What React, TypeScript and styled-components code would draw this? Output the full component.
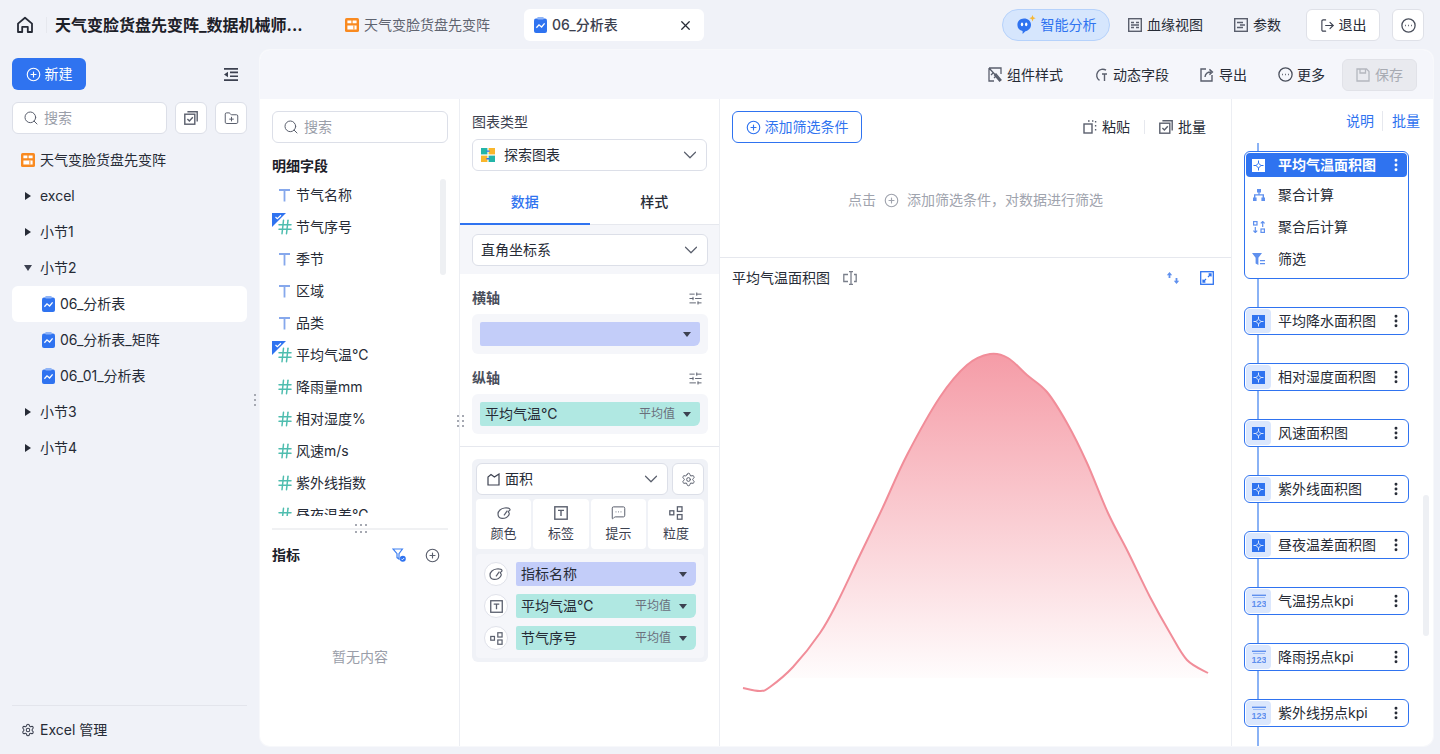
import React from "react";
import styled, { createGlobalStyle } from "styled-components";
import {
  ChevronDown,
  CirclePlus,
  EllipsisVertical,
  FolderPlus,
  Hash,
  LogOut,
  MessageSquareMore,
  Search,
  Settings,
  SlidersHorizontal,
  X,
} from "lucide-react";

const BLUE = "#2f73f0";
const INK = "#262b36";
const ICON = "#5a5f6d";

const GlobalStyle = createGlobalStyle`
  html, body { margin: 0; padding: 0; height: 100%; overflow: hidden; }
  body {
    font-family: "Inter", "Noto Sans CJK SC", "Noto Sans", sans-serif;
    font-size: 14px;
    line-height: 20px;
    color: ${INK};
  }
  * { box-sizing: border-box; }
`;

/* ---------- icons ---------- */
const Svg = styled.svg`
  flex: none;
  display: block;
`;

const HomeIcon = () => (
  <Svg width="18" height="18" viewBox="0 0 18 18" fill="none" stroke="#262b36" strokeWidth="1.8" strokeLinejoin="round">
    <path d="M2 7.600 9 1.800l7 5.800V16h-4.200v-5.200H6.200V16H2z" />
  </Svg>
);
const DashIcon = () => (
  <Svg width="14" height="14" viewBox="0 0 14 14">
    <rect width="14" height="14" rx="1.600" fill="#f98a20" />
    <path d="M2.400 2.400h4v2.800h-4zM7.600 2.400h4v2.800h-4zM2.400 7.400h9.200v4.200H2.400z" fill="#fff" />
    <path d="M8.400 7.400h1v4.200h-1z" fill="#f98a20" />
  </Svg>
);
const SheetIcon = () => (
  <Svg width="13" height="16" viewBox="0 0 13 16">
    <rect y="1.400" width="13" height="14.600" rx="2" fill="#2f73f0" />
    <rect x="3.200" y="0" width="6.600" height="2.600" rx="1" fill="#8fb4f7" />
    <path d="M2.400 10.800 5 7.800 7.600 10l3-3.600" fill="none" stroke="#fff" strokeWidth="1.300" />
  </Svg>
);
const PuzzleIcon = ({ color = "#2f73f0", cut = "#dbe7fd" }: { color?: string; cut?: string }) => (
  <Svg width="13" height="13" viewBox="0 0 13 13">
    <rect width="13" height="13" fill={color} />
    <path d="M6.500 1.500V4.200L4 6.500M1.500 6.500H4L6.500 9V11.500M11.500 6.500H9L6.500 4.200M9 6.500 6.500 9" fill="none" stroke={cut} strokeWidth="1" />
  </Svg>
);
const KpiBadge = styled.text`
  font-family: "Liberation Sans", sans-serif;
  font-size: 9px;
  font-weight: 700;
`;
const KpiIcon = () => (
  <Svg width="14" height="14" viewBox="0 0 14 14">
    <rect width="14" height="1.400" y="0.600" fill="#5f90ee" />
    <rect x="1" width="12" height="1" y="3" fill="#9dbcf5" />
    <KpiBadge x="7" y="13" textAnchor="middle" fill="#5f90ee">123</KpiBadge>
  </Svg>
);
const BotIcon = () => (
  <Svg width="20" height="20" viewBox="0 0 20 20">
    <path d="M8 3.600c4 0 7 2.700 7 6.200 0 3.400-2.600 6-5.600 6.400L6.600 19v-3c-3-.7-5.200-3-5.200-6.100 0-3.500 2.700-6.300 6.600-6.300z" fill="#2f73f0" />
    <ellipse cx="6" cy="9.400" rx="1.200" ry="1.800" fill="#fff" />
    <ellipse cx="10.200" cy="9.400" rx="1.200" ry="1.800" fill="#fff" />
    <path d="M16.500 0l.9 2.300 2.300.9-2.300.9-.9 2.300-.9-2.300-2.300-.9 2.300-.9z" fill="#f7b733" />
  </Svg>
);
const PanelIcon = ({ double }: { double?: boolean }) => (
  <Svg width="14" height="14" viewBox="0 0 14 14" fill="none" stroke="#5a5f6d">
    <rect x="0.700" y="0.700" width="12.600" height="12.600" strokeWidth="1.400" />
    {double ? (
      <path d="M3 4.500h3M8 4.500h3M3 7h8M3 9.500h3M8 9.500h3" strokeWidth="1.300" />
    ) : (
      <path d="M3 4.500h6M6 7h5M3 9.500h6" strokeWidth="1.300" />
    )}
  </Svg>
);
const OutdentIcon = () => (
  <Svg width="14" height="13" viewBox="0 0 14 13" fill="#3c4150">
    <path d="M0 0h14v1.800H0zM6 3.600h8v1.600H6zM6 7.400h8V9H6zM0 11.200h14V13H0zM4 3.800v5.400L0 6.500z" />
  </Svg>
);
const MoreIcon = () => (
  <Svg width="15" height="15" viewBox="0 0 15 15" fill="none" stroke="#4a4f5c" strokeWidth="1.300">
    <circle cx="7.500" cy="7.500" r="6.600" />
    <path d="M4.200 7.500h.8M7.100 7.500h.8M10 7.500h.8" strokeWidth="1.600" />
  </Svg>
);
const StyleIcon = () => (
  <Svg width="14" height="15" viewBox="0 0 14 15" fill="none" stroke="#5a5f6d" strokeWidth="1.300">
    <path d="M1 1h12v6M1 1v13h5M1 1l11 12M5 6l-2 2M8 9l-2 2" />
    <path d="M8 7l5 6-1.400 1-5-6z" />
  </Svg>
);
const DynamicIcon = () => (
  <Svg width="14" height="15" viewBox="0 0 14 15" fill="none" stroke="#5a5f6d" strokeWidth="1.400">
    <path d="M12 3.200A6 6 0 1 0 5.500 13.400" />
    <path d="M8 7h5M10.500 7v7" />
  </Svg>
);
const ExportIcon = () => (
  <Svg width="14" height="15" viewBox="0 0 14 15" fill="none" stroke="#5a5f6d" strokeWidth="1.400">
    <path d="M6 2H1v12h11V8" />
    <path d="M5 10c.3-3 2.400-5 6-5M9.400 2.400 12.400 5l-3 2.600" />
  </Svg>
);
const SaveIcon = () => (
  <Svg width="14" height="14" viewBox="0 0 14 14" fill="none" stroke="#b4b7bf" strokeWidth="1.300">
    <path d="M1 1h9.500L13 3.500V13H1zM4 1v4h5.500V1" />
  </Svg>
);
const PasteIcon = () => (
  <Svg width="14" height="14" viewBox="0 0 14 14" fill="none" stroke="#5a5f6d" strokeWidth="1.400">
    <rect x="1" y="4" width="8" height="9" />
    <path d="M5 1h1.600M9 1h1.400M12.600 1v1.600M12.600 5v1.600M12.600 9v1.400" />
  </Svg>
);
const BatchIcon = () => (
  <Svg width="14" height="14" viewBox="0 0 14 14" fill="none" stroke="#5a5f6d" strokeWidth="1.400">
    <rect x="0.800" y="3.200" width="10" height="10" />
    <path d="M3.400.8h9.800v9.800M3.400 8l2 2 3.400-3.800" />
  </Svg>
);
const CaretDown = styled.span<{ $big?: boolean }>`
  flex: none;
  width: 0;
  height: 0;
  border-left: ${(p) => (p.$big ? 4.5 : 4)}px solid transparent;
  border-right: ${(p) => (p.$big ? 4.5 : 4)}px solid transparent;
  border-top: ${(p) => (p.$big ? 6 : 5)}px solid #3c4150;
`;
const CaretRight = styled.span`
  flex: none;
  width: 0;
  height: 0;
  border-top: 4.500px solid transparent;
  border-bottom: 4.500px solid transparent;
  border-left: 6px solid #262b36;
`;
const ExploreIcon = () => (
  <Svg width="14" height="14" viewBox="0 0 14 14">
    <rect width="6.400" height="6.400" fill="#23b5a8" />
    <rect x="7.600" width="6.400" height="6.400" fill="#f9b62c" />
    <rect y="7.600" width="6.400" height="6.400" fill="#f9b62c" />
    <rect x="7.600" y="7.600" width="6.400" height="6.400" fill="#23b5a8" />
    <path d="M5.400 2.400h3.200v1.400H5.400zM5.400 10h3.200v1.400H5.400z" fill="#2f73f0" />
  </Svg>
);
const AreaIcon = () => (
  <Svg width="13" height="13" viewBox="0 0 13 13" fill="none" stroke="#3c4150" strokeWidth="1.200">
    <path d="M1 12V4l3-2.400L7.400 4 12 1v11z" />
  </Svg>
);
const PaletteIcon = ({ size = 14 }: { size?: number }) => (
  <Svg width={size} height={size} viewBox="0 0 14 14" fill="none" stroke="#5a5f6d" strokeWidth="1.200">
    <path d="M1 8c0-3 3-5.600 6.600-6 2.400-.2 5 .4 5.400 1.400.4 1.200-1.600 1.200-1.600 2.400 0 1 1.200 1 .8 2.400C11.600 11 8 12.600 5 12.400 2.600 12.200 1 10.400 1 8z" />
    <path d="M7 9.400 10.400 4.600" />
  </Svg>
);
const LabelIcon = ({ size = 14 }: { size?: number }) => (
  <Svg width={size} height={size} viewBox="0 0 14 14" fill="none" stroke="#5a5f6d" strokeWidth="1.400">
    <rect x="0.800" y="0.800" width="12.400" height="12.400" />
    <path d="M4 4.400h6M7 4.400v5.600" />
  </Svg>
);
const GrainIcon = ({ size = 14 }: { size?: number }) => (
  <Svg width={size} height={size} viewBox="0 0 14 14" fill="none" stroke="#5a5f6d" strokeWidth="1.300">
    <rect x="0.800" y="4.800" width="4" height="4" />
    <rect x="8.400" y="0.800" width="4.600" height="4.600" />
    <rect x="8.400" y="8.600" width="4.600" height="4.600" />
  </Svg>
);
const FilterDoneIcon = () => (
  <Svg width="14" height="14" viewBox="0 0 14 14" fill="none">
    <path d="M1 1h9.400L7 5.600V11L5 9.600V5.600z" stroke="#3f80f2" strokeWidth="1.200" />
    <circle cx="10.800" cy="10.800" r="3" fill="#2f73f0" />
    <path d="M9.400 10.800l1 1 1.800-1.800" stroke="#fff" strokeWidth="0.900" />
  </Svg>
);
const TextFieldIcon = () => (
  <Svg width="14" height="14" viewBox="0 0 14 14" fill="none" stroke="#86a8ec" strokeWidth="1.800">
    <path d="M1 2h11M6.500 2V13.500" />
  </Svg>
);
const MergeIcon = () => (
  <Svg width="12" height="12" viewBox="0 0 12 12" fill="#5f90ee">
    <path d="M4 0h4v3.600H6.600v1.600H11V8.400h1V12H8.400V8.400h1.200V6.600H2.400v1.800h1.200V12H0V8.400h1V5.200h4.400V3.600H4z" />
  </Svg>
);
const PostCalcIcon = () => (
  <Svg width="12" height="12" viewBox="0 0 12 12" fill="none" stroke="#5f90ee" strokeWidth="1.200">
    <rect x="0.600" y="0.600" width="3.400" height="3.400" />
    <rect x="8" y="8" width="3.400" height="3.400" />
    <path d="M2.300 6v5.400M.4 9.600l1.900 1.900 1.900-1.900M9.700 6V.6M7.800 2.400 9.700.5l1.900 1.900" />
  </Svg>
);
const FilterIcon = () => (
  <Svg width="13" height="12" viewBox="0 0 13 12">
    <path d="M0 0h10L6.400 4.800V12L3.600 10.400V4.800z" fill="#5f90ee" />
    <path d="M8 7h5v1.200H8zM8 10h5v1.200H8z" fill="#5f90ee" />
  </Svg>
);
const SwapIcon = () => (
  <Svg width="14" height="14" viewBox="0 0 14 14" fill="#5f90ee">
    <path d="M3.500 1 6.200 4.200H4.400V7H2.600V4.200H.8zM10.500 13 7.800 9.800h1.800V7h1.800v2.800h1.800z" />
  </Svg>
);
const ExpandIcon = () => (
  <Svg width="14" height="14" viewBox="0 0 14 14" fill="none" stroke="#2f73f0" strokeWidth="1.300">
    <rect x="0.700" y="0.700" width="12.600" height="12.600" />
    <path d="M8 6l3-3M8.600 3H11v2.400M6 8l-3 3M5.400 11H3V8.600" />
  </Svg>
);
const CursorIcon = () => (
  <Svg width="14" height="14" viewBox="0 0 14 14" fill="none" stroke="#7a7f8b" strokeWidth="1.300">
    <path d="M5 3.500H.8v7H5M11 3.500h2.200v7H11M6 .7h4M6 13.300h4M8 .7v12.600" />
  </Svg>
);
const NumberGlyph = styled(Hash)`
  flex: none;
  margin: 0 -2px 0 -2px;
`;

/* ---------- shell ---------- */
const Page = styled.div`
  width: 1440px;
  height: 754px;
  background: #f0f2f8;
  display: flex;
  flex-direction: column;
  overflow: hidden;
`;
const TopBar = styled.header`
  height: 50px;
  flex: none;
  display: flex;
  align-items: center;
  padding: 0 16px;
`;
const HomeButton = styled.div`
  width: 31px;
  flex: none;
  border-right: 1px solid #e6e8ee;
  height: 16px;
  display: flex;
  align-items: center;
  margin-right: 8px;
`;
const Title = styled.div`
  font-size: 16px;
  font-weight: 700;
  width: 252px;
  flex: none;
  white-space: nowrap;
  color: #1c2028;
`;
const OpenTab = styled.div<{ $active?: boolean }>`
  display: flex;
  align-items: center;
  gap: 5px;
  height: 32px;
  flex: none;
  border-radius: 6px;
  padding: 0 ${(p) => (p.$active ? 10 : 9)}px;
  background: ${(p) => (p.$active ? "#fff" : "transparent")};
  color: ${(p) => (p.$active ? "#3c4150" : "#5f6470")};
  font-weight: ${(p) => (p.$active ? 500 : 400)};
  width: ${(p) => (p.$active ? "180px" : "auto")};
  margin-left: ${(p) => (p.$active ? "25px" : "29px")};
`;
const TabClose = styled.span`
  margin-left: auto;
  display: flex;
  color: #262b36;
  margin-right: 1px;
`;
const TopActions = styled.div`
  margin-left: auto;
  display: flex;
  align-items: center;
`;
const AiPill = styled.div`
  height: 32px;
  width: 108px;
  border-radius: 16px;
  background: #d6e6fd;
  border: 1px solid #b6d2fb;
  color: ${BLUE};
  display: flex;
  align-items: center;
  justify-content: center;
  gap: 5px;
  margin-right: 18px;
`;
const TextAction = styled.div<{ $gap?: number }>`
  display: flex;
  align-items: center;
  gap: 5px;
  margin-right: ${(p) => p.$gap ?? 0}px;
  white-space: nowrap;
`;
const OutlineButton = styled.div<{ $wide?: boolean }>`
  height: 32px;
  width: ${(p) => (p.$wide ? "74px" : "32px")};
  margin-left: ${(p) => (p.$wide ? "0" : "12px")};
  background: #fff;
  border: 1px solid #dfe1e8;
  border-radius: 6px;
  display: flex;
  align-items: center;
  justify-content: center;
  gap: 4px;
  color: ${INK};
`;
const Body = styled.div`
  flex: 1;
  min-height: 0;
  display: flex;
`;

/* ---------- left sidebar ---------- */
const Sidebar = styled.aside`
  width: 260px;
  flex: none;
  display: flex;
  flex-direction: column;
  padding: 8px 13px 0 12px;
  position: relative;
`;
const SideHead = styled.div`
  display: flex;
  align-items: center;
  justify-content: space-between;
  height: 32px;
  padding-right: 9px;
  margin-bottom: 12px;
`;
const NewButton = styled.div`
  width: 74px;
  height: 32px;
  border-radius: 6px;
  background: ${BLUE};
  color: #fff;
  display: flex;
  align-items: center;
  justify-content: center;
  gap: 4px;
`;
const SearchRow = styled.div`
  display: flex;
  gap: 8px;
  margin-bottom: 8px;
`;
const SearchBox = styled.div`
  flex: 1;
  height: 32px;
  display: flex;
  align-items: center;
  gap: 5px;
  padding-left: 10px;
  border: 1px solid #dcdfe8;
  border-radius: 6px;
  background: #fff;
  color: #9a9ea9;
`;
const FieldSearch = styled(SearchBox)`
  flex: none;
`;
const SquareButton = styled.div`
  width: 32px;
  height: 32px;
  flex: none;
  border: 1px solid #dcdfe8;
  border-radius: 6px;
  background: #fff;
  display: flex;
  align-items: center;
  justify-content: center;
`;
const TreeRow = styled.div<{ $indent?: number; $active?: boolean }>`
  height: 36px;
  display: flex;
  align-items: center;
  padding-left: ${(p) => p.$indent ?? 12}px;
  gap: 5px;
  border-radius: 6px;
  background: ${(p) => (p.$active ? "#fff" : "transparent")};
`;
const CaretSlot = styled.span`
  width: 16px;
  display: flex;
  justify-content: center;
  margin-right: -1px;
  margin-left: -1px;
`;
const SideFoot = styled.div`
  margin-top: auto;
  height: 49px;
  border-top: 1px solid #e3e5ec;
  display: flex;
  align-items: center;
  gap: 5px;
  padding-left: 9px;
`;
const DragDots = styled.div`
  position: absolute;
  display: grid;
  grid-template-columns: 2px;
  gap: 3px;
  z-index: 1;
  & > i {
    width: 2px;
    height: 2px;
    background: #a6a9b2;
  }
`;
const SideDots = styled(DragDots)`
  right: 4px;
  top: 344px;
`;
const SplitDots = styled(DragDots)`
  grid-template-columns: repeat(3, 2px);
  left: 95px;
  top: 425px;
  row-gap: 5px;
`;
const ColumnDots = styled(DragDots)`
  grid-template-columns: repeat(2, 2px);
  left: 197px;
  top: 316px;
`;
const Dots = ({ Comp, n }: { Comp: typeof DragDots; n: number }) => (
  <Comp>{Array.from({ length: n }, (_, i) => <i key={i} />)}</Comp>
);

/* ---------- main panel ---------- */
const Main = styled.main`
  flex: 1;
  min-width: 0;
  margin: 0 7px 8px 0;
  border-radius: 10px;
  background: #fff;
  box-shadow: 0 0 0 1px #f7f8fb;
  display: flex;
  flex-direction: column;
  overflow: hidden;
`;
const Toolbar = styled.div`
  height: 49px;
  flex: none;
  background: #f5f6fb;
  display: flex;
  align-items: center;
  justify-content: flex-end;
  padding-right: 16px;
  gap: 31px;
`;
const SaveButton = styled.div`
  width: 75px;
  height: 32px;
  background: #e9eaef;
  border: 1px solid #e1e2e8;
  border-radius: 6px;
  color: #a8abb3;
  display: flex;
  align-items: center;
  justify-content: center;
  gap: 5px;
  margin-left: -14px;
`;
const MoreAction = styled(TextAction)`
  gap: 4px;
`;
const Columns = styled.div`
  flex: 1;
  min-height: 0;
  display: flex;
`;

/* ---------- field column ---------- */
const FieldColumn = styled.section`
  width: 200px;
  flex: none;
  border-right: 1px solid #eceef3;
  padding: 12px 11px 0 12px;
  display: flex;
  flex-direction: column;
  position: relative;
`;
const SectionTitle = styled.div`
  font-weight: 700;
  font-size: 14px;
  color: #1c2028;
  line-height: 20px;
`;
const FieldHead = styled(SectionTitle)`
  margin-top: 13px;
`;
const FieldList = styled.div`
  height: 337px;
  flex: none;
  margin-top: 3px;
  overflow: hidden;
  position: relative;
`;
const FieldRow = styled.div`
  height: 32px;
  display: flex;
  align-items: center;
  gap: 4px;
  padding-left: 6px;
  position: relative;
`;
const CheckCorner = styled.svg`
  position: absolute;
  left: 0;
  top: 2px;
  z-index: 1;
`;
const ScrollThumb = styled.div`
  position: absolute;
  right: 2px;
  top: 0;
  width: 6px;
  height: 96px;
  background: #eef0f3;
  border-radius: 3px;
`;
const SplitLine = styled.div`
  height: 2px;
  background: #f0f1f3;
  margin-top: 12px;
  flex: none;
`;
const MetricHead = styled.div`
  display: flex;
  align-items: center;
  margin-top: 15px;
  padding-right: 8px;
  gap: 19px;
  & > :first-child {
    margin-right: auto;
  }
`;
const EmptyText = styled.div`
  text-align: center;
  margin-top: 82px;
  color: #9a9ea9;
`;

/* ---------- config column ---------- */
const ConfigColumn = styled.section`
  width: 260px;
  flex: none;
  border-right: 1px solid #eceef3;
  display: flex;
  flex-direction: column;
`;
const ChartTypeBlock = styled.div`
  padding: 13px 12px 0;
`;
const Label = styled.div`
  color: #3c4150;
  margin-bottom: 7px;
`;
const SelectBox = styled.div<{ $w?: number }>`
  height: 32px;
  width: ${(p) => (p.$w ? `${p.$w}px` : "100%")};
  border: 1px solid #dcdfe8;
  border-radius: 6px;
  background: #fff;
  display: flex;
  align-items: center;
  gap: 9px;
  padding: 0 8px;
  & > :last-child {
    margin-left: auto;
    margin-right: -3px;
  }
`;
const Tabs = styled.div`
  display: flex;
  height: 54px;
  flex: none;
  border-bottom: 1px solid #e6e8ee;
`;
const Tab = styled.div<{ $active?: boolean }>`
  flex: 1;
  display: flex;
  align-items: center;
  justify-content: center;
  padding-top: 10px;
  font-weight: 500;
  color: ${(p) => (p.$active ? BLUE : INK)};
  border-bottom: 2px solid ${(p) => (p.$active ? BLUE : "transparent")};
  margin-bottom: -1px;
`;
const CoordBlock = styled.div`
  background: #f5f6fa;
  height: 49px;
  flex: none;
  padding: 9px 11px 0 12px;
`;
const AxisHead = styled.div<{ $first?: boolean }>`
  display: flex;
  align-items: center;
  justify-content: space-between;
  padding: 0 16px 0 12px;
  height: 20px;
  margin-top: ${(p) => (p.$first ? 14 : 0)}px;
  font-weight: 700;
  color: #4a4f5c;
`;
const AxisBlock = styled.div`
  margin: 6px 11px 14px 12px;
  background: #f5f6fa;
  border-radius: 6px;
  padding: 8px;
  height: 40px;
`;
const Pill = styled.div<{ $tone: "violet" | "teal" }>`
  height: 24px;
  flex: 1;
  min-width: 0;
  border-radius: 2px 2px 6px 2px;
  background: ${(p) => (p.$tone === "violet" ? "#c3cdf9" : "#b0e8e2")};
  display: flex;
  align-items: center;
  padding: 0 9px 0 5px;
  color: #262b36;
  justify-content: space-between;
`;
const PillRight = styled.span`
  display: flex;
  align-items: center;
  gap: 8px;
  font-size: 12px;
  color: #6a6f7c;
  margin-left: auto;
`;
const ConfigDivider = styled.div`
  height: 1px;
  background: #e6e8ee;
  margin-top: -2px;
`;
const MarkBox = styled.div`
  margin: 12px 11px 0 12px;
  background: #f0f2f7;
  border-radius: 6px;
  padding: 4px;
  display: flex;
  flex-direction: column;
  gap: 4px;
`;
const MarkTop = styled.div`
  display: flex;
  gap: 4px;
`;
const MarkSelectIcon = styled.span`
  display: flex;
  align-items: center;
  gap: 5px;
  margin-left: 2px;
`;
const MarkGrid = styled.div`
  display: grid;
  grid-template-columns: 55px 56px 55px 56px;
  gap: 2px;
`;
const MarkCell = styled.div`
  height: 50px;
  background: #fff;
  border-radius: 4px;
  display: flex;
  flex-direction: column;
  align-items: center;
  justify-content: center;
  gap: 3px;
  font-size: 13px;
  color: #3c4150;
`;
const EncodeBox = styled.div`
  margin-top: 1px;
  background: #f5f6fa;
  border-radius: 4px;
  padding: 8px;
  display: flex;
  flex-direction: column;
  gap: 8px;
`;
const EncodeRow = styled.div`
  display: flex;
  align-items: center;
  gap: 8px;
`;
const EncodeIcon = styled.div`
  width: 24px;
  height: 24px;
  flex: none;
  border-radius: 50%;
  border: 1px solid #e0e2ea;
  background: #fff;
  display: flex;
  align-items: center;
  justify-content: center;
`;

/* ---------- chart column ---------- */
const ChartColumn = styled.section`
  width: 512px;
  flex: none;
  border-right: 1px solid #eceef3;
  display: flex;
  flex-direction: column;
  min-height: 0;
`;
const FilterPanel = styled.div`
  height: 159px;
  flex: none;
  border-bottom: 1px solid #e6e8ee;
  padding: 12px 12px 0;
`;
const FilterBar = styled.div`
  display: flex;
  align-items: center;
  justify-content: space-between;
`;
const AddFilter = styled.div`
  width: 130px;
  height: 32px;
  border: 1px solid ${BLUE};
  border-radius: 6px;
  color: ${BLUE};
  display: flex;
  align-items: center;
  justify-content: center;
  gap: 4px;
`;
const PasteGroup = styled.div`
  display: flex;
  align-items: center;
  padding-right: 13px;
`;
const PasteSep = styled.span`
  width: 1px;
  height: 14px;
  background: #e6e8ee;
  margin: 0 14px;
`;
const FilterHint = styled.div`
  display: flex;
  align-items: center;
  justify-content: center;
  gap: 8px;
  margin-top: 47px;
  color: #a0a4ae;
`;
const ChartHead = styled.div`
  height: 40px;
  flex: none;
  display: flex;
  align-items: center;
  padding: 0 17px 0 12px;
  gap: 13px;
`;
const ChartIcons = styled.div`
  margin-left: auto;
  display: flex;
  gap: 20px;
`;
const ChartSvg = styled.svg`
  display: block;
  flex: none;
`;

const points: [number, number][] = [
  [23, 398], [40, 401], [50, 397], [73, 377], [100, 343], [117, 313], [140, 265],
  [163, 217], [187, 165], [220, 107], [247, 75], [270, 64], [288, 68], [307, 85],
  [327, 102], [347, 133], [367, 173], [388, 223], [408, 262], [430, 307], [450, 343],
  [467, 370], [488, 383],
];

// catmull-rom through the sampled points, close enough to the chart's smoothing
function smoothPath(pts: [number, number][]) {
  let d = `M${pts[0][0]} ${pts[0][1]}`;
  for (let i = 0; i < pts.length - 1; i++) {
    const p0 = pts[Math.max(i - 1, 0)];
    const p1 = pts[i];
    const p2 = pts[i + 1];
    const p3 = pts[Math.min(i + 2, pts.length - 1)];
    const c1x = p1[0] + (p2[0] - p0[0]) / 6;
    const c1y = p1[1] + (p2[1] - p0[1]) / 6;
    const c2x = p2[0] - (p3[0] - p1[0]) / 6;
    const c2y = p2[1] - (p3[1] - p1[1]) / 6;
    d += ` C${c1x.toFixed(1)} ${c1y.toFixed(1)} ${c2x.toFixed(1)} ${c2y.toFixed(1)} ${p2[0]} ${p2[1]}`;
  }
  return d;
}

const AreaChart = () => {
  const line = smoothPath(points);
  return (
    <ChartSvg width="511" height="430" viewBox="0 8 511 430">
      <defs>
        <linearGradient id="areaFill" x1="0" y1="64" x2="0" y2="388" gradientUnits="userSpaceOnUse">
          <stop offset="0" stopColor="#f59ca7" />
          <stop offset="1" stopColor="#f59ca7" stopOpacity="0.03" />
        </linearGradient>
        <clipPath id="areaClip">
          <rect x="0" y="0" width="511" height="388" />
        </clipPath>
      </defs>
      <path d={`${line} L488 388 L23 388 Z`} fill="url(#areaFill)" clipPath="url(#areaClip)" />
      <path d={line} fill="none" stroke="#f18d99" strokeWidth="2" />
    </ChartSvg>
  );
};

/* ---------- step column ---------- */
const StepColumn = styled.section`
  flex: 1;
  min-width: 0;
  position: relative;
  padding: 0 12px;
  overflow: hidden;
`;
const StepLinks = styled.div`
  height: 44px;
  display: flex;
  justify-content: flex-end;
  align-items: center;
  color: ${BLUE};
  padding-right: 1px;
  & > span + span {
    margin-left: 8px;
    padding-left: 9px;
    border-left: 1px solid #e6e8ee;
  }
`;
const StepList = styled.div`
  position: relative;
  width: 165px;
  display: flex;
  flex-direction: column;
  gap: 28px;
  padding-top: 8px;
  &::before {
    content: "";
    position: absolute;
    left: 13px;
    top: 0;
    bottom: -60px;
    width: 2px;
    background: #8ab2f5;
  }
`;
const StepCard = styled.div`
  position: relative;
  background: #fff;
  border: 1px solid ${BLUE};
  border-radius: 6px;
  padding: 1px;
`;
const StepHead = styled.div<{ $active?: boolean }>`
  height: 24px;
  display: flex;
  align-items: center;
  border-radius: 4px;
  background: ${(p) => (p.$active ? BLUE : "transparent")};
  color: ${(p) => (p.$active ? "#fff" : INK)};
  font-weight: ${(p) => (p.$active ? 700 : 400)};
`;
const StepIconWrap = styled.span<{ $active?: boolean }>`
  width: 25px;
  height: 24px;
  flex: none;
  border-radius: 4px;
  display: flex;
  align-items: center;
  justify-content: center;
  background: ${(p) => (p.$active ? "transparent" : "#dbe7fd")};
  margin-right: 7px;
`;
const StepMenu = styled.span`
  margin-left: auto;
  margin-right: 3px;
  display: flex;
`;
const SubRow = styled.div`
  height: 32px;
  display: flex;
  align-items: center;
  & > span:first-child {
    width: 25px;
    display: flex;
    justify-content: center;
    margin-right: 7px;
  }
`;
const SubRows = styled.div`
  padding: 2px 0;
`;
const StepScroll = styled.div`
  position: absolute;
  right: 4px;
  top: 396px;
  width: 6px;
  height: 141px;
  background: #eef0f4;
  border-radius: 3px;
`;

const fields = [
  { kind: "t", name: "节气名称" },
  { kind: "n", name: "节气序号", used: true },
  { kind: "t", name: "季节" },
  { kind: "t", name: "区域" },
  { kind: "t", name: "品类" },
  { kind: "n", name: "平均气温℃", used: true },
  { kind: "n", name: "降雨量mm" },
  { kind: "n", name: "相对湿度%" },
  { kind: "n", name: "风速m/s" },
  { kind: "n", name: "紫外线指数" },
  { kind: "n", name: "昼夜温差℃" },
];

const steps = [
  { name: "平均降水面积图", kpi: false },
  { name: "相对湿度面积图", kpi: false },
  { name: "风速面积图", kpi: false },
  { name: "紫外线面积图", kpi: false },
  { name: "昼夜温差面积图", kpi: false },
  { name: "气温拐点kpi", kpi: true },
  { name: "降雨拐点kpi", kpi: true },
  { name: "紫外线拐点kpi", kpi: true },
];

export default function App() {
  return (
    <Page>
      <GlobalStyle />
      <TopBar>
        <HomeButton>
          <HomeIcon />
        </HomeButton>
        <Title>天气变脸货盘先变阵_数据机械师...</Title>
        <OpenTab>
          <DashIcon />
          天气变脸货盘先变阵
        </OpenTab>
        <OpenTab $active>
          <SheetIcon />
          06_分析表
          <TabClose>
            <X size={15} strokeWidth={2} />
          </TabClose>
        </OpenTab>
        <TopActions>
          <AiPill>
            <BotIcon />
            智能分析
          </AiPill>
          <TextAction $gap={31}>
            <PanelIcon double />
            血缘视图
          </TextAction>
          <TextAction $gap={25}>
            <PanelIcon />
            参数
          </TextAction>
          <OutlineButton $wide>
            <LogOut size={15} strokeWidth={1.8} color="#3c4150" />
            退出
          </OutlineButton>
          <OutlineButton>
            <MoreIcon />
          </OutlineButton>
        </TopActions>
      </TopBar>
      <Body>
        <Sidebar>
          <SideHead>
            <NewButton>
              <CirclePlus size={15} strokeWidth={1.8} />
              新建
            </NewButton>
            <OutdentIcon />
          </SideHead>
          <SearchRow>
            <SearchBox>
              <Search size={16} color={ICON} strokeWidth={1.5} />
              搜索
            </SearchBox>
            <SquareButton>
              <BatchIcon />
            </SquareButton>
            <SquareButton>
              <FolderPlus size={15} color={ICON} strokeWidth={1.6} />
            </SquareButton>
          </SearchRow>
          <TreeRow $indent={9}>
            <DashIcon />
            <span>天气变脸货盘先变阵</span>
          </TreeRow>
          <TreeRow $indent={9}>
            <CaretSlot><CaretRight /></CaretSlot>
            excel
          </TreeRow>
          <TreeRow $indent={9}>
            <CaretSlot><CaretRight /></CaretSlot>
            小节1
          </TreeRow>
          <TreeRow $indent={9}>
            <CaretSlot><CaretDown $big /></CaretSlot>
            小节2
          </TreeRow>
          <TreeRow $indent={30} $active>
            <SheetIcon />
            06_分析表
          </TreeRow>
          <TreeRow $indent={30}>
            <SheetIcon />
            06_分析表_矩阵
          </TreeRow>
          <TreeRow $indent={30}>
            <SheetIcon />
            06_01_分析表
          </TreeRow>
          <TreeRow $indent={9}>
            <CaretSlot><CaretRight /></CaretSlot>
            小节3
          </TreeRow>
          <TreeRow $indent={9}>
            <CaretSlot><CaretRight /></CaretSlot>
            小节4
          </TreeRow>
          <SideFoot>
            <Settings size={14} color="#3c4150" strokeWidth={1.8} />
            Excel 管理
          </SideFoot>
          <Dots Comp={SideDots} n={3} />
        </Sidebar>
        <Main>
          <Toolbar>
            <TextAction><StyleIcon />组件样式</TextAction>
            <TextAction><DynamicIcon />动态字段</TextAction>
            <TextAction><ExportIcon />导出</TextAction>
            <MoreAction><MoreIcon />更多</MoreAction>
            <SaveButton><SaveIcon />保存</SaveButton>
          </Toolbar>
          <Columns>
            <FieldColumn>
              <FieldSearch>
                <Search size={16} color={ICON} strokeWidth={1.5} />
                搜索
              </FieldSearch>
              <FieldHead>明细字段</FieldHead>
              <FieldList>
                {fields.map((f) => (
                  <FieldRow key={f.name}>
                    {f.used && (
                      <CheckCorner width="14" height="14" viewBox="0 0 14 14">
                        <path d="M0 0h14L0 14z" fill={BLUE} />
                        <path d="M3.500 4l1.800 1.600L9 2.200" fill="none" stroke="#fff" strokeWidth="1.200" />
                      </CheckCorner>
                    )}
                    {f.kind === "t" ? (
                      <TextFieldIcon />
                    ) : (
                      <NumberGlyph size={18} color="#4fbdaf" strokeWidth={2} />
                    )}
                    {f.name}
                  </FieldRow>
                ))}
                <ScrollThumb />
              </FieldList>
              <SplitLine />
              <Dots Comp={SplitDots} n={6} />
              <MetricHead>
                <SectionTitle>指标</SectionTitle>
                <FilterDoneIcon />
                <CirclePlus size={15} color={ICON} strokeWidth={1.8} />
              </MetricHead>
              <EmptyText>暂无内容</EmptyText>
              <Dots Comp={ColumnDots} n={6} />
            </FieldColumn>
            <ConfigColumn>
              <ChartTypeBlock>
                <Label>图表类型</Label>
                <SelectBox>
                  <ExploreIcon />
                  探索图表
                  <ChevronDown size={22} color={ICON} strokeWidth={1.3} />
                </SelectBox>
              </ChartTypeBlock>
              <Tabs>
                <Tab $active>数据</Tab>
                <Tab>样式</Tab>
              </Tabs>
              <CoordBlock>
                <SelectBox>
                  直角坐标系
                  <ChevronDown size={22} color={ICON} strokeWidth={1.3} />
                </SelectBox>
              </CoordBlock>
              <AxisHead $first>
                横轴
                <SlidersHorizontal size={15} color={ICON} strokeWidth={1.5} />
              </AxisHead>
              <AxisBlock>
                <Pill $tone="violet">
                  <PillRight><CaretDown /></PillRight>
                </Pill>
              </AxisBlock>
              <AxisHead>
                纵轴
                <SlidersHorizontal size={15} color={ICON} strokeWidth={1.5} />
              </AxisHead>
              <AxisBlock>
                <Pill $tone="teal">
                  平均气温℃
                  <PillRight>平均值<CaretDown /></PillRight>
                </Pill>
              </AxisBlock>
              <ConfigDivider />
              <MarkBox>
                <MarkTop>
                  <SelectBox $w={192}>
                    <MarkSelectIcon><AreaIcon />面积</MarkSelectIcon>
                    <ChevronDown size={22} color={ICON} strokeWidth={1.3} />
                  </SelectBox>
                  <SquareButton><Settings size={15} color={ICON} strokeWidth={1.6} /></SquareButton>
                </MarkTop>
                <MarkGrid>
                  <MarkCell><PaletteIcon />颜色</MarkCell>
                  <MarkCell><LabelIcon />标签</MarkCell>
                  <MarkCell><MessageSquareMore size={15} color={ICON} strokeWidth={1.6} />提示</MarkCell>
                  <MarkCell><GrainIcon />粒度</MarkCell>
                </MarkGrid>
                <EncodeBox>
                  <EncodeRow>
                    <EncodeIcon><PaletteIcon /></EncodeIcon>
                    <Pill $tone="violet">
                      指标名称
                      <PillRight><CaretDown /></PillRight>
                    </Pill>
                  </EncodeRow>
                  <EncodeRow>
                    <EncodeIcon><LabelIcon size={13} /></EncodeIcon>
                    <Pill $tone="teal">
                      平均气温℃
                      <PillRight>平均值<CaretDown /></PillRight>
                    </Pill>
                  </EncodeRow>
                  <EncodeRow>
                    <EncodeIcon><GrainIcon size={13} /></EncodeIcon>
                    <Pill $tone="teal">
                      节气序号
                      <PillRight>平均值<CaretDown /></PillRight>
                    </Pill>
                  </EncodeRow>
                </EncodeBox>
              </MarkBox>
            </ConfigColumn>
            <ChartColumn>
              <FilterPanel>
                <FilterBar>
                  <AddFilter>
                    <CirclePlus size={15} strokeWidth={1.8} />
                    添加筛选条件
                  </AddFilter>
                  <PasteGroup>
                    <TextAction><PasteIcon />粘贴</TextAction>
                    <PasteSep />
                    <TextAction><BatchIcon />批量</TextAction>
                  </PasteGroup>
                </FilterBar>
                <FilterHint>
                  点击
                  <CirclePlus size={15} color="#a0a4ae" strokeWidth={1.8} />
                  添加筛选条件，对数据进行筛选
                </FilterHint>
              </FilterPanel>
              <ChartHead>
                平均气温面积图
                <CursorIcon />
                <ChartIcons>
                  <SwapIcon />
                  <ExpandIcon />
                </ChartIcons>
              </ChartHead>
              <AreaChart />
            </ChartColumn>
            <StepColumn>
              <StepLinks>
                <span>说明</span>
                <span>批量</span>
              </StepLinks>
              <StepList>
                <StepCard>
                  <StepHead $active>
                    <StepIconWrap $active><PuzzleIcon color="#fff" cut={BLUE} /></StepIconWrap>
                    平均气温面积图
                    <StepMenu><EllipsisVertical size={16} color="#fff" strokeWidth={2.4} /></StepMenu>
                  </StepHead>
                  <SubRows>
                    <SubRow><span><MergeIcon /></span>聚合计算</SubRow>
                    <SubRow><span><PostCalcIcon /></span>聚合后计算</SubRow>
                    <SubRow><span><FilterIcon /></span>筛选</SubRow>
                  </SubRows>
                </StepCard>
                {steps.map((s) => (
                  <StepCard key={s.name}>
                    <StepHead>
                      <StepIconWrap>{s.kpi ? <KpiIcon /> : <PuzzleIcon />}</StepIconWrap>
                      {s.name}
                      <StepMenu><EllipsisVertical size={16} color="#262b36" strokeWidth={2.4} /></StepMenu>
                    </StepHead>
                  </StepCard>
                ))}
              </StepList>
              <StepScroll />
            </StepColumn>
          </Columns>
        </Main>
      </Body>
    </Page>
  );
}
